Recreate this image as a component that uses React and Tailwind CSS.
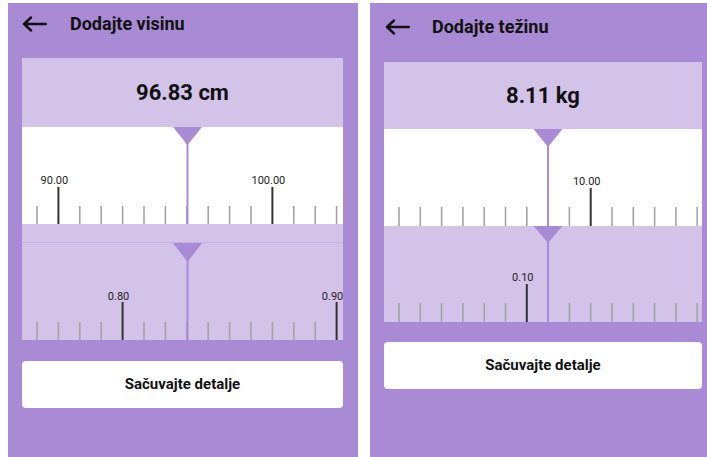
import React from "react";

const PURPLE = "#a98ad5";

function Arrow() {
  return (
    <svg width="25" height="16" viewBox="0 0 25 16" className="shrink-0">
      <path d="M2 8 H24 M9 1.5 L2 8 L9 14.5" fill="none" stroke="#111" strokeWidth="2.4" strokeLinecap="round" strokeLinejoin="round" />
    </svg>
  );
}

function Ruler({ width, height, step, pointer, minorTop, majorTop, labelY, majors, apex, bg }) {
  const ticks = [];
  for (let i = 0; i < 15; i++) {
    const x = 15 + step * i;
    const m = majors.find((mm) => mm.i === i);
    ticks.push(
      <line key={"t" + i} x1={x} x2={x} y1={m ? majorTop : minorTop} y2={height} stroke={m ? "#333333" : "#a3a3a3"} strokeWidth={m ? 2 : 1.6} />
    );
    if (m) {
      ticks.push(
        <text key={"l" + i} x={x - 4} y={labelY} textAnchor="middle" fontSize="11" fill="#222" fontFamily="Roboto, 'Liberation Sans', sans-serif">
          {m.label}
        </text>
      );
    }
  }
  return (
    <div className={bg}>
      <svg width={width} height={height} className="block">
        {ticks}
        <line x1={pointer} x2={pointer} y1={apex - 2} y2={height} stroke={PURPLE} strokeWidth="2" />
        <polygon points={`${pointer - 14.5},0 ${pointer + 14.5},0 ${pointer},${apex}`} fill={PURPLE} />
      </svg>
    </div>
  );
}

export default function App() {
  return (
    <div
      className="w-[707px] h-[457px] bg-white flex pt-[3px] pl-[8px] gap-[12px] overflow-hidden"
      style={{ fontFamily: "Roboto, 'Liberation Sans', sans-serif" }}
    >
      {/* Left panel */}
      <div className="w-[350px] h-[454px] bg-[#a98ad5] flex flex-col shrink-0">
        <div className="h-[42px] flex items-center pl-[14px] gap-[23px]">
          <Arrow />
          <span className="text-[18px] font-bold text-[#111] leading-none">Dodajte visinu</span>
        </div>
        <div className="w-[321px] ml-[14px] mt-[13px] flex flex-col">
          <div className="h-[69px] bg-[#d3c3e9] flex items-center justify-center">
            <span className="text-[22px] font-bold text-[#111]">96.83 cm</span>
          </div>
          <Ruler
            width={321}
            height={97}
            step={21.4}
            pointer={165.5}
            minorTop={79}
            majorTop={60}
            labelY={57}
            apex={18}
            bg="bg-white"
            majors={[{ i: 1, label: "90.00" }, { i: 11, label: "100.00" }]}
          />
          <div className="h-[19px] bg-[#d3c3e9] border-b border-[#c6b2e2]" />
          <Ruler
            width={321}
            height={97}
            step={21.4}
            pointer={165.5}
            minorTop={79}
            majorTop={59}
            labelY={57}
            apex={19}
            bg="bg-[#d3c3e9]"
            majors={[{ i: 4, label: "0.80" }, { i: 14, label: "0.90" }]}
          />
        </div>
        <button className="w-[321px] ml-[14px] mt-[21px] h-[47px] bg-white rounded-[4px] flex items-center justify-center">
          <span className="text-[15px] font-bold text-[#111]">Sačuvajte detalje</span>
        </button>
      </div>

      {/* Right panel */}
      <div className="w-[337px] h-[454px] bg-[#a98ad5] flex flex-col shrink-0">
        <div className="h-[48px] flex items-center pl-[15px] gap-[22px]">
          <Arrow />
          <span className="text-[18px] font-bold text-[#111] leading-none">Dodajte težinu</span>
        </div>
        <div className="w-[318px] ml-[14px] mt-[11px] flex flex-col">
          <div className="h-[67px] bg-[#d3c3e9] flex items-center justify-center">
            <span className="text-[22px] font-bold text-[#111]">8.11 kg</span>
          </div>
          <Ruler
            width={318}
            height={97}
            step={21.3}
            pointer={164}
            minorTop={78}
            majorTop={59}
            labelY={56}
            apex={18}
            bg="bg-white"
            majors={[{ i: 9, label: "10.00" }]}
          />
          <Ruler
            width={318}
            height={96}
            step={21.3}
            pointer={164}
            minorTop={77}
            majorTop={58}
            labelY={55}
            apex={17}
            bg="bg-[#d3c3e9]"
            majors={[{ i: 6, label: "0.10" }]}
          />
        </div>
        <button className="w-[318px] ml-[14px] mt-[20px] h-[47px] bg-white rounded-[4px] flex items-center justify-center">
          <span className="text-[15px] font-bold text-[#111]">Sačuvajte detalje</span>
        </button>
      </div>
    </div>
  );
}
